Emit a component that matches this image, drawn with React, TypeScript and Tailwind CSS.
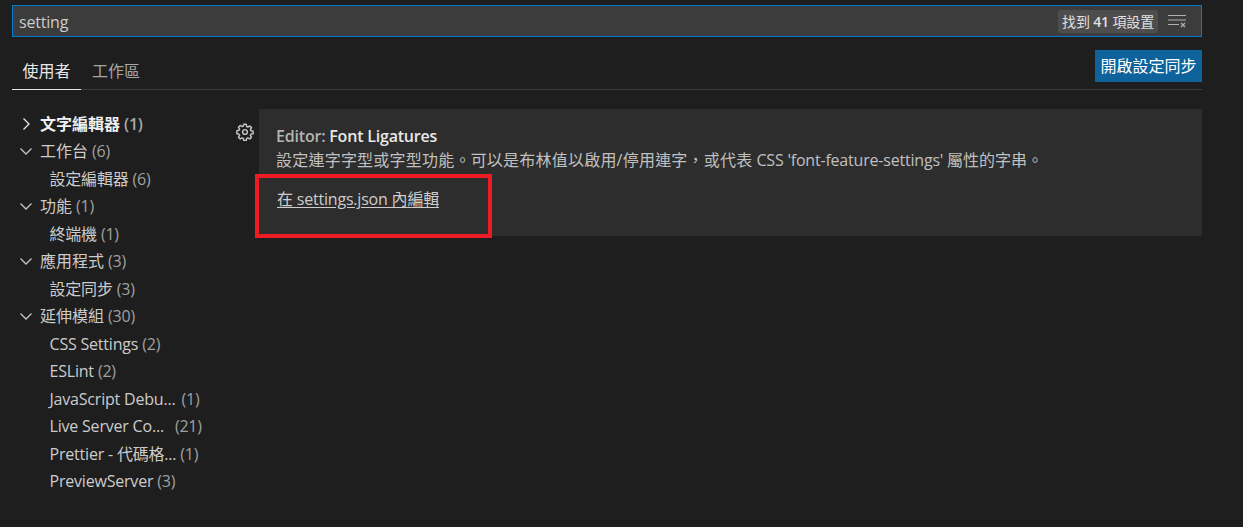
import React from "react";

const font = { fontFamily: '"Open Sans", "Noto Sans CJK TC", sans-serif' };

function Chevron({ down, bright }: { down?: boolean; bright?: boolean }) {
  return (
    <svg width="16" height="16" viewBox="0 0 16 16" fill="none" stroke={bright ? "#e8e8e8" : "#c5c5c5"} strokeWidth="1.3" className="shrink-0">
      {down ? <path d="M2.5 5.5 L8 11 L13.5 5.5" /> : <path d="M5.5 2.5 L11 8 L5.5 13.5" />}
    </svg>
  );
}

function Head({ label, count, bold, down = true }: { label: string; count: string; bold?: boolean; down?: boolean }) {
  return (
    <div className="flex h-[27.5px] items-center pl-[18px] text-[16px] tracking-[-0.2px] whitespace-nowrap">
      <Chevron down={down} bright={bold} />
      <span className={bold ? "ml-[6px] font-bold tracking-normal text-[#f0f0f0]" : "ml-[6px] tracking-normal text-[#cccccc]"}>{label}</span>
      <span className={bold ? "ml-[4px] font-semibold text-[#a8a8a8]" : "ml-[4px] text-[#a0a0a0]"}>{count}</span>
    </div>
  );
}

function Item({ label, count, gap = "ml-1" }: { label: string; count: string; gap?: string }) {
  return (
    <div className="flex h-[27.5px] w-[235px] items-center pl-[49.5px] text-[16px] tracking-[-0.2px] whitespace-nowrap">
      <span className="text-[#cccccc]">{label}</span>
      <span className={`${gap} text-[#a0a0a0]`}>{count}</span>
    </div>
  );
}

export default function App() {
  return (
    <div className="relative h-[527px] w-[1243px] overflow-hidden bg-[#1e1e1e] text-[#cccccc]" style={font}>
      <div className="mx-[12px] mt-[5px] flex h-[32px] w-[1190px] items-center border border-[#007acc] bg-[#3c3c3c] pl-[6px] pr-[14px]">
        <span className="translate-y-[1px] text-[16px] tracking-[-0.2px] text-[#cccccc]">setting</span>
        <span className="ml-auto flex h-[23px] items-center rounded-[3px] bg-[#4d4d4d] px-[4px] text-[14px] tracking-[-0.15px] text-[#e0e0e0]">找到&nbsp;<span className="font-semibold">41</span>&nbsp;項設置</span>
        <svg width="20" height="16" viewBox="0 0 20 16" className="ml-[9px]" fill="none" stroke="#b0b0b0" strokeWidth="1.2">
          <path d="M1 2.5 H19 M1 7 H19 M1 11.5 H12" />
          <path d="M14 10 L18 14 M18 10 L14 14" />
        </svg>
      </div>

      <div className="mx-[12px] mt-[13px] flex h-[40px] w-[1190px] items-start border-b border-[#3c3c3c]">
        <div className="-mb-px flex h-[40px] w-[69px] items-center justify-center border-b border-[#e7e7e7] pt-[2px] text-[16px] text-[#e7e7e7]">使用者</div>
        <div className="flex h-[40px] items-center pl-[11px] pt-[2px] text-[16px] text-[#a6a6a6]">
          <span className="whitespace-nowrap">工作區</span>
        </div>
        <div className="ml-auto flex h-[32px] w-[107px] items-center justify-center bg-[#0e639c] text-[16px] text-[#ffffff]">開啟設定同步</div>
      </div>

      <div className="mt-[19px] flex">
        <div className="w-[235px] shrink-0 pt-[1px]">
          <Head label="文字編輯器" count="(1)" bold down={false} />
          <Head label="工作台" count="(6)" />
          <Item label="設定編輯器" count="(6)" />
          <Head label="功能" count="(1)" />
          <Item label="終端機" count="(1)" />
          <Head label="應用程式" count="(3)" />
          <Item label="設定同步" count="(3)" />
          <Head label="延伸模組" count="(30)" />
          <Item label="CSS Settings" count="(2)" />
          <Item label="ESLint" count="(2)" />
          <Item label="JavaScript Debu..." count="(1)" gap="ml-[6px]" />
          <Item label="Live Server Co..." count="(21)" gap="ml-[11px]" />
          <Item label="Prettier - 代碼格..." count="(1)" />
          <Item label="PreviewServer" count="(3)" />
        </div>
        <div className="relative flex-1">
          <svg width="18" height="18" viewBox="0 0 16 16" className="absolute left-[1px] top-[14px]" fill="none" stroke="#c5c5c5" strokeWidth="1.3" strokeLinejoin="round">
            <circle cx="8" cy="8" r="2.1" />
            <path d="M6.9 1.2h2.2l.4 1.9 1.1.5 1.7-1 1.5 1.5-1 1.7.5 1.1 1.9.4v2.2l-1.9.4-.5 1.1 1 1.7-1.5 1.5-1.7-1-1.1.5-.4 1.9H6.9l-.4-1.9-1.1-.5-1.7 1-1.5-1.5 1-1.7-.5-1.1-1.9-.4V6.9l1.9-.4.5-1.1-1-1.7 1.5-1.5 1.7 1 1.1-.5z" />
          </svg>
          <div className="ml-[24px] mr-[41px] h-[127px] bg-[#2d2d2d] pl-[17px] pt-[17px]">
            <div className="text-[16px] leading-[20px] font-semibold tracking-[-0.2px] whitespace-nowrap">
              <span className="text-[#b4b4b4]">Editor: </span>
              <span className="text-[#e8e8e8]">Font Ligatures</span>
            </div>
            <div className="mt-[4px] text-[16px] leading-[20px] whitespace-nowrap text-[#c0c0c0]">
              <span className="tracking-[0.22px]">設定連字字型或字型功能。可以是布林值以啟用/停用連字，或代表</span>
              <span className="tracking-[-0.2px]"> CSS 'font-feature-settings' </span>
              <span>屬性的字串。</span>
            </div>
            <div className="ml-[1px] mt-[19px] text-[16px] leading-[20px] tracking-[-0.2px] whitespace-nowrap text-[#cccccc] underline underline-offset-2">在 settings.json 內編輯</div>
          </div>
        </div>
      </div>

      <div className="absolute left-[255px] top-[174px] h-[64px] w-[237px] border-[4px] border-[#ed1c24]" />
    </div>
  );
}
